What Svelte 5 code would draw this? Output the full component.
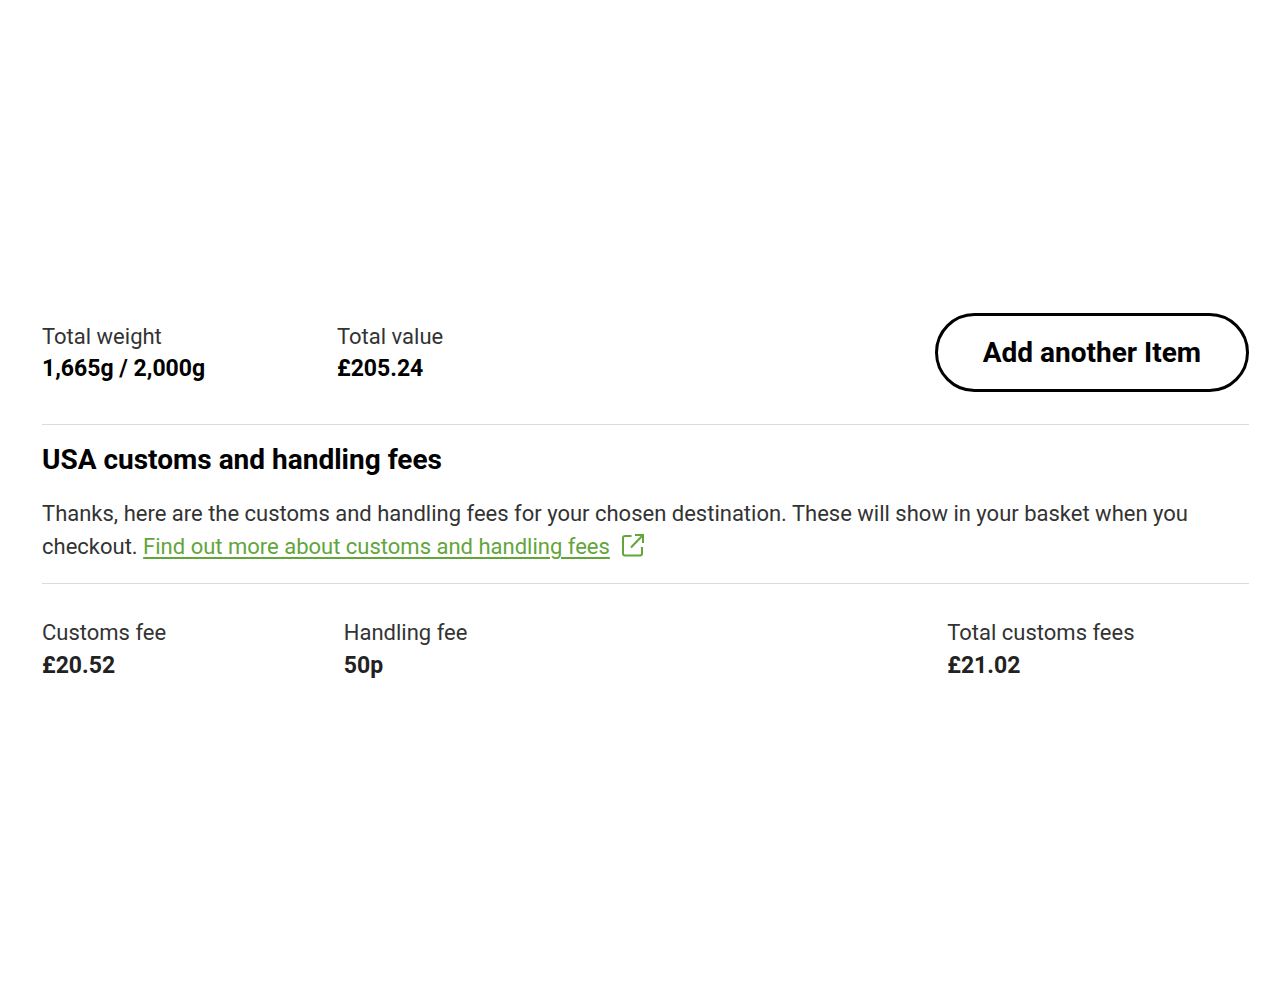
<script>
  const totals = [
    { label: 'Total weight', value: '1,665g / 2,000g' },
    { label: 'Total value', value: '£205.24' }
  ];
  const fees = [
    { label: 'Customs fee', value: '£20.52' },
    { label: 'Handling fee', value: '50p' },
    { label: 'Total customs fees', value: '£21.02' }
  ];
</script>

<main>
  <section class="summary">
    <dl class="totals">
      {#each totals as total}
        <div><dt>{total.label}</dt><dd>{total.value}</dd></div>
      {/each}
    </dl>
    <button type="button">Add another Item</button>
  </section>
  <section class="info">
    <h2>USA customs and handling fees</h2>
    <p>
      Thanks, here are the customs and handling fees for your chosen destination. These will show in your basket when you checkout.
      <a href="#fees"><span>Find out more about customs and handling fees</span><svg viewBox="0 0 24 24" aria-hidden="true"><path d="M10.500 3H4Q2 3 2 5V20.500Q2 22.500 4 22.500H19Q21 22.500 21 20.500V14M10 14.500L22 2" /><path d="M14 2H22V10" /></svg></a>
    </p>
  </section>
  <dl class="fees" id="fees">
    {#each fees as fee}
      <div><dt>{fee.label}</dt><dd>{fee.value}</dd></div>
    {/each}
  </dl>
</main>

<style>
  :global(body) { margin: 0; background: #fff; }
  main {
    padding: 313px 31px 40px 42px;
    font-family: Roboto, "Liberation Sans", sans-serif;
    font-size: 22px;
    line-height: 33px;
    color: #333;
  }
  dl, dd, h2, p { margin: 0; }
  dd { font-size: 23px; font-weight: 700; color: #222; }
  .summary {
    display: flex;
    justify-content: space-between;
    align-items: flex-start;
    padding-bottom: 32px;
    border-bottom: 1px solid #dcdcdc;
  }
  .totals {
    display: grid;
    grid-template-columns: 295px auto;
    padding-top: 8px;
    line-height: 32px;
  }
  .totals dd { color: #000; }
  button {
    padding: 20px 45px;
    border: 3px solid #000;
    border-radius: 40px;
    background: #fff;
    color: #000;
    font: 700 28px/33px Roboto, "Liberation Sans", sans-serif;
  }
  .info { padding: 18px 0 20px; border-bottom: 1px solid #dcdcdc; }
  h2 { margin-bottom: 20px; font-size: 28px; line-height: 34px; color: #000; }
  a { color: #62a53a; text-decoration: none; }
  a span { text-decoration: underline; text-decoration-thickness: 2px; text-underline-offset: 3px; }
  svg {
    width: 24px;
    height: 24px;
    margin-left: 11px;
    vertical-align: -3px;
    fill: none;
    stroke: currentColor;
    stroke-width: 2;
  }
  .fees { display: grid; grid-template-columns: 1fr 2fr 1fr; padding-top: 32px; }
</style>
